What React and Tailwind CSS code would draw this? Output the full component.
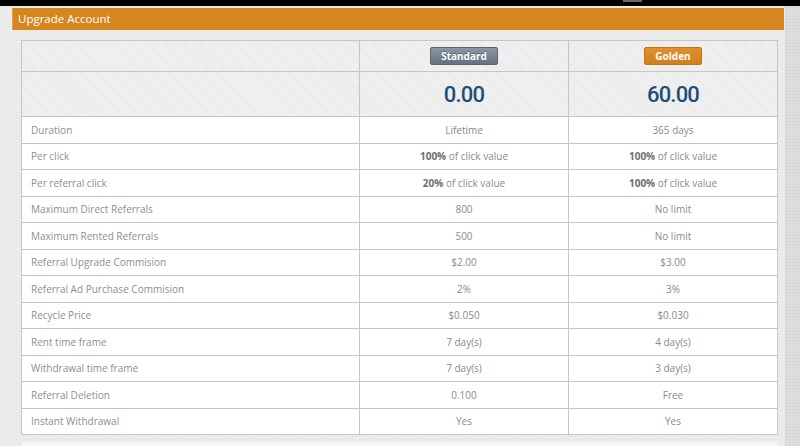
import React from "react";

const rows = [
    { label: "Duration", std: "Lifetime", gold: "365 days" },
    { label: "Per click", std: ["100%", " of click value"], gold: ["100%", " of click value"] },
    { label: "Per referral click", std: ["20%", " of click value"], gold: ["100%", " of click value"] },
    { label: "Maximum Direct Referrals", std: "800", gold: "No limit" },
    { label: "Maximum Rented Referrals", std: "500", gold: "No limit" },
    { label: "Referral Upgrade Commision", std: "$2.00", gold: "$3.00" },
    { label: "Referral Ad Purchase Commision", std: "2%", gold: "3%" },
    { label: "Recycle Price", std: "$0.050", gold: "$0.030" },
    { label: "Rent time frame", std: "7 day(s)", gold: "4 day(s)" },
    { label: "Withdrawal time frame", std: "7 day(s)", gold: "3 day(s)" },
    { label: "Referral Deletion", std: "0.100", gold: "Free" },
    { label: "Instant Withdrawal", std: "Yes", gold: "Yes" },
];

function Value({ v }) {
    if (Array.isArray(v)) {
        return (
            <>
                <b className="font-bold text-[#6e6e6e]">{v[0]}</b>
                {v[1]}
            </>
        );
    }
    return v;
}

export default function App() {
    const pattern =
        "bg-[#ececec] bg-[radial-gradient(#e2e2e2_1px,transparent_1px)] bg-[length:3px_3px]";
    const stripe =
        "bg-[#eeeeee] bg-[repeating-linear-gradient(45deg,#e8e8e8_0px,#e8e8e8_1px,#f1f1f1_1px,#f1f1f1_3px)]";

    return (
        <div className={`w-[800px] h-[446px] overflow-hidden font-['Open_Sans',sans-serif] ${pattern}`}>
            {/* top bar */}
            <div className="relative h-[6px] bg-black">
                <div className="absolute left-[623px] top-0 h-[2px] w-[19px] bg-[#666]" />
            </div>

            <div className="flex h-[440px]">
                <div className="w-[785px] shrink-0">
                    {/* titlebar */}
                    <div className="ml-[12px] mt-[2px] w-[772px] h-[22px] bg-[#d5861f] border-l border-[#e0a050] flex items-center pl-[5px]">
                        <span className="text-[11.5px] text-white leading-none">Upgrade Account</span>
                    </div>

                    <table className="ml-[21px] mt-[10px] border-collapse text-[10px] text-[#8a8a8a] bg-white">
                        <colgroup>
                            <col className="w-[338px]" />
                            <col className="w-[209px]" />
                            <col className="w-[209px]" />
                        </colgroup>
                        <thead>
                            <tr className={`h-[31px] ${stripe}`}>
                                <th className="border border-[#c6c6c6]" />
                                <th className="border border-[#c6c6c6] text-center">
                                    <span className="inline-block w-[68px] h-[18px] leading-[16px] rounded-[2px] border border-[#5a6572] bg-[linear-gradient(#8d98a5,#65717f)] text-white text-[10px] font-bold [text-shadow:0_-1px_0_rgba(0,0,0,0.3)]">
                                        Standard
                                    </span>
                                </th>
                                <th className="border border-[#c6c6c6] text-center">
                                    <span className="inline-block w-[58px] h-[18px] leading-[16px] rounded-[2px] border border-[#c27516] bg-[linear-gradient(#df9131,#d07f1c)] text-white text-[10px] font-bold">
                                        Golden
                                    </span>
                                </th>
                            </tr>
                            <tr className={`h-[45px] ${stripe}`}>
                                <th className="border border-[#c6c6c6]" />
                                <th className="border border-[#c6c6c6] text-center font-medium font-['Roboto',sans-serif] text-[22px] tracking-[-0.8px] text-[#1d4f79]">
                                    0.00
                                </th>
                                <th className="border border-[#c6c6c6] text-center font-medium font-['Roboto',sans-serif] text-[22px] tracking-[-0.8px] text-[#1d4f79]">
                                    60.00
                                </th>
                            </tr>
                        </thead>
                        <tbody>
                            {rows.map((r, i) => (
                                <tr key={r.label} className={i % 2 === 0 ? "h-[27px]" : "h-[26px]"}>
                                    <td className="border border-[#c6c6c6] pl-[9px] text-[#8e8e8e]">{r.label}</td>
                                    <td className="border border-[#c6c6c6] text-center">
                                        <Value v={r.std} />
                                    </td>
                                    <td className="border border-[#c6c6c6] text-center">
                                        <Value v={r.gold} />
                                    </td>
                                </tr>
                            ))}
                        </tbody>
                    </table>
                    <div className="ml-[22px] mt-[7px] w-[755px] h-[6px] bg-[#f7f7f7]" />
                </div>
                {/* right strip */}
                <div className="flex-1 bg-[#dddddd] bg-[radial-gradient(#d0d0d0_1px,transparent_1px)] bg-[length:3px_3px]" />
            </div>
        </div>
    );
}
